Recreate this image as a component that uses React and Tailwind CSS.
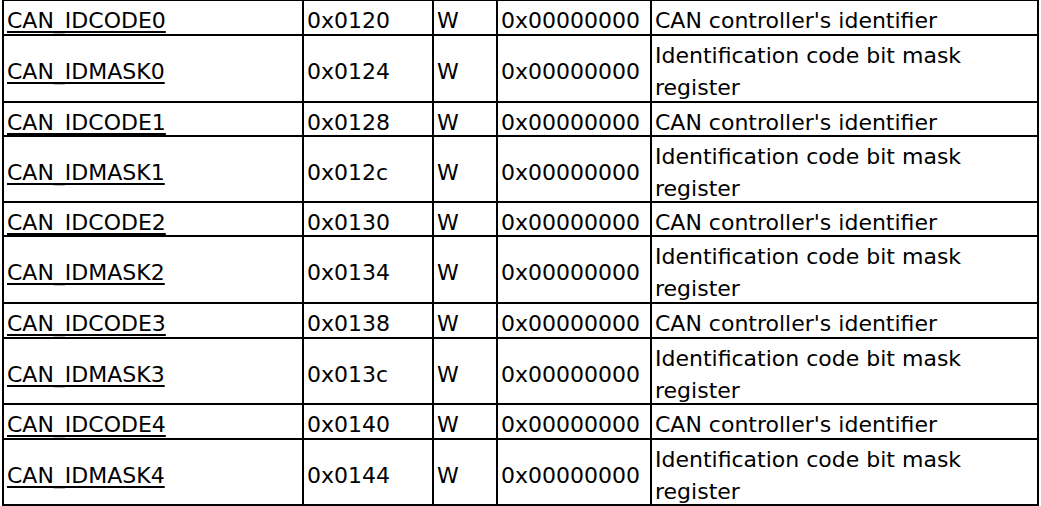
const rows = [
  { name: 'CAN_IDCODE0', addr: '0x0120', desc: "CAN controller's identifier", h: 'h-[35px]' },
  { name: 'CAN_IDMASK0', addr: '0x0124', desc: 'Identification code bit mask register', h: 'h-[67px]' },
  { name: 'CAN_IDCODE1', addr: '0x0128', desc: "CAN controller's identifier", h: 'h-[34px]' },
  { name: 'CAN_IDMASK1', addr: '0x012c', desc: 'Identification code bit mask register', h: 'h-[66px]' },
  { name: 'CAN_IDCODE2', addr: '0x0130', desc: "CAN controller's identifier", h: 'h-[34px]' },
  { name: 'CAN_IDMASK2', addr: '0x0134', desc: 'Identification code bit mask register', h: 'h-[67px]' },
  { name: 'CAN_IDCODE3', addr: '0x0138', desc: "CAN controller's identifier", h: 'h-[35px]' },
  { name: 'CAN_IDMASK3', addr: '0x013c', desc: 'Identification code bit mask register', h: 'h-[66px]' },
  { name: 'CAN_IDCODE4', addr: '0x0140', desc: "CAN controller's identifier", h: 'h-[35px]' },
  { name: 'CAN_IDMASK4', addr: '0x0144', desc: 'Identification code bit mask register', h: 'h-[66px]' },
];

function Cell({ children }) {
  return (
    <div className="flex items-center border-r-2 border-black pl-[3px] pr-1 pt-1">
      {children}
    </div>
  );
}

export default function App() {
  return (
    <div className="w-[1041px] h-[506px] overflow-hidden bg-white">
      <div
        className="ml-[2px] -mt-px w-[1037px] border-l-2 border-t-2 border-black text-[22px] leading-[32px] text-black"
        style={{ fontFamily: '"DejaVu Sans", Verdana, sans-serif' }}
      >
        {rows.map((r) => (
          <div
            key={r.name}
            className={`grid grid-cols-[300px_130px_64px_154px_1fr] border-b-2 border-black ${r.h}`}
          >
            <Cell>
              <span className="underline underline-offset-[3px]">{r.name}</span>
            </Cell>
            <Cell>{r.addr}</Cell>
            <Cell>W</Cell>
            <Cell>0x00000000</Cell>
            <Cell>
              <span>{r.desc}</span>
            </Cell>
          </div>
        ))}
      </div>
    </div>
  );
}
